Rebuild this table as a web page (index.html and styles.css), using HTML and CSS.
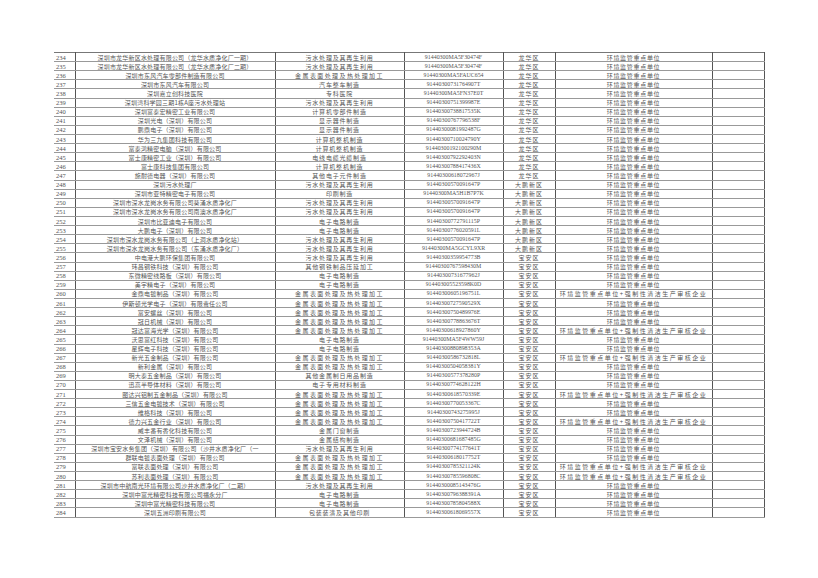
FILE: index.html
```html
<!DOCTYPE html>
<html lang="zh-CN">
<head>
<meta charset="utf-8">
<title>环境监管重点单位名录</title>
<link rel="stylesheet" href="styles.css">
</head>
<body>
<div class="page">
<table class="sheet">
<colgroup>
<col class="c-no"><col class="c-name"><col class="c-ind"><col class="c-code"><col class="c-dist"><col class="c-cat"><col class="c-note">
</colgroup>
<tbody>
<tr><td class="no">234</td><td class="name">深圳市龙华新区水处理有限公司（龙华水质净化厂一期）</td><td class="ind">污水处理及其再生利用</td><td class="code">91440300MA5F30474F</td><td class="dist">龙华区</td><td class="cat">环境监管重点单位</td><td></td></tr>
<tr><td class="no">235</td><td class="name">深圳市龙华新区水处理有限公司（龙华水质净化厂二期）</td><td class="ind">污水处理及其再生利用</td><td class="code">91440300MA5F30474F</td><td class="dist">龙华区</td><td class="cat">环境监管重点单位</td><td></td></tr>
<tr><td class="no">236</td><td class="name">深圳市东风汽车零部件制造有限公司</td><td class="ind wide">金属表面处理及热处理加工</td><td class="code">91440300MA5FAUC654</td><td class="dist">龙华区</td><td class="cat">环境监管重点单位</td><td></td></tr>
<tr><td class="no">237</td><td class="name">深圳市东风汽车有限公司</td><td class="ind">汽车整车制造</td><td class="code">91440300731764907T</td><td class="dist">龙华区</td><td class="cat">环境监管重点单位</td><td></td></tr>
<tr><td class="no">238</td><td class="name">深圳嘉立创科技医院</td><td class="ind">专科医院</td><td class="code">91440300MA5FN37E0T</td><td class="dist">龙华区</td><td class="cat">环境监管重点单位</td><td></td></tr>
<tr><td class="no">239</td><td class="name">深圳湾科学园三期1栋A座污水处理站</td><td class="ind">污水处理及其再生利用</td><td class="code">91440300751399987E</td><td class="dist">龙华区</td><td class="cat">环境监管重点单位</td><td></td></tr>
<tr><td class="no">240</td><td class="name">深圳富泰宏精密工业有限公司</td><td class="ind">计算机零部件制造</td><td class="code">91440300738817535K</td><td class="dist">龙华区</td><td class="cat">环境监管重点单位</td><td></td></tr>
<tr><td class="no">241</td><td class="name">深圳光电（深圳）有限公司</td><td class="ind">显示器件制造</td><td class="code">91440300767796538F</td><td class="dist">龙华区</td><td class="cat">环境监管重点单位</td><td></td></tr>
<tr><td class="no">242</td><td class="name">鹏鼎电子（深圳）有限公司</td><td class="ind">显示器件制造</td><td class="code">91440300081992487G</td><td class="dist">龙华区</td><td class="cat">环境监管重点单位</td><td></td></tr>
<tr><td class="no">243</td><td class="name">华为三九集团科技有限公司</td><td class="ind">计算机整机制造</td><td class="code">91440300710024790Y</td><td class="dist">龙华区</td><td class="cat">环境监管重点单位</td><td></td></tr>
<tr><td class="no">244</td><td class="name">富泰鸿精密电脑（深圳）有限公司</td><td class="ind">计算机整机制造</td><td class="code">91440300192100290M</td><td class="dist">龙华区</td><td class="cat">环境监管重点单位</td><td></td></tr>
<tr><td class="no">245</td><td class="name">富士康精密工业（深圳）有限公司</td><td class="ind">电线电缆光缆制造</td><td class="code">91440300792292403N</td><td class="dist">龙华区</td><td class="cat">环境监管重点单位</td><td></td></tr>
<tr><td class="no">246</td><td class="name">富士康科技集团有限公司</td><td class="ind">计算机整机制造</td><td class="code">91440300788417436X</td><td class="dist">龙华区</td><td class="cat">环境监管重点单位</td><td></td></tr>
<tr><td class="no">247</td><td class="name">施耐德电器（深圳）有限公司</td><td class="ind">其他电子元件制造</td><td class="code">91440300618072967J</td><td class="dist">龙华区</td><td class="cat">环境监管重点单位</td><td></td></tr>
<tr><td class="no">248</td><td class="name">深圳污水处理厂</td><td class="ind">污水处理及其再生利用</td><td class="code">91440300570091647P</td><td class="dist">大鹏新区</td><td class="cat">环境监管重点单位</td><td></td></tr>
<tr><td class="no">249</td><td class="name">深圳市亚特精密电子有限公司</td><td class="ind">印刷制造</td><td class="code">91440300MA5H1B7P7K</td><td class="dist">大鹏新区</td><td class="cat">环境监管重点单位</td><td></td></tr>
<tr><td class="no">250</td><td class="name">深圳市深水龙岗水务有限公司葵涌水质净化厂</td><td class="ind">污水处理及其再生利用</td><td class="code">91440300570091647P</td><td class="dist">大鹏新区</td><td class="cat">环境监管重点单位</td><td></td></tr>
<tr><td class="no">251</td><td class="name">深圳市深水龙岗水务有限公司南澳水质净化厂</td><td class="ind">污水处理及其再生利用</td><td class="code">91440300570091647P</td><td class="dist">大鹏新区</td><td class="cat">环境监管重点单位</td><td></td></tr>
<tr><td class="no">252</td><td class="name">深圳市比亚迪电子有限公司</td><td class="ind">电子电路制造</td><td class="code">91440300772791115P</td><td class="dist">大鹏新区</td><td class="cat">环境监管重点单位</td><td></td></tr>
<tr><td class="no">253</td><td class="name">大鹏电子（深圳）有限公司</td><td class="ind">电子电路制造</td><td class="code">91440300776020591L</td><td class="dist">大鹏新区</td><td class="cat">环境监管重点单位</td><td></td></tr>
<tr><td class="no">254</td><td class="name">深圳市深水龙岗水务有限公司（上洞水质净化站）</td><td class="ind">污水处理及其再生利用</td><td class="code">91440300570091647P</td><td class="dist">大鹏新区</td><td class="cat">环境监管重点单位</td><td></td></tr>
<tr><td class="no">255</td><td class="name">深圳市深水龙岗水务有限公司（东涌水质净化厂）</td><td class="ind">污水处理及其再生利用</td><td class="code">91440300MA5GCYL9XR</td><td class="dist">大鹏新区</td><td class="cat">环境监管重点单位</td><td></td></tr>
<tr><td class="no">256</td><td class="name">中电港大鹏环保集团有限公司</td><td class="ind">污水处理及其再生利用</td><td class="code">91440300359954773B</td><td class="dist">宝安区</td><td class="cat">环境监管重点单位</td><td></td></tr>
<tr><td class="no">257</td><td class="name">玮昌钢铁科技（深圳）有限公司</td><td class="ind">其他钢铁制品压延加工</td><td class="code">91440300767598430M</td><td class="dist">宝安区</td><td class="cat">环境监管重点单位</td><td></td></tr>
<tr><td class="no">258</td><td class="name">东微精密线路板（深圳）有限公司</td><td class="ind">电子电路制造</td><td class="code">91440300731677962J</td><td class="dist">宝安区</td><td class="cat">环境监管重点单位</td><td></td></tr>
<tr><td class="no">259</td><td class="name">美宇精电子（深圳）有限公司</td><td class="ind">电子电路制造</td><td class="code">914403005523598K0D</td><td class="dist">宝安区</td><td class="cat">环境监管重点单位</td><td></td></tr>
<tr><td class="no">260</td><td class="name">金鼎电镀制品（深圳）有限公司</td><td class="ind wide">金属表面处理及热处理加工</td><td class="code">91440300605196751L</td><td class="dist">宝安区</td><td class="cat wide">环境监管重点单位+强制性清洁生产审核企业</td><td></td></tr>
<tr><td class="no">261</td><td class="name">伊斯顿光学电子（深圳）有限责任公司</td><td class="ind wide">金属表面处理及热处理加工</td><td class="code">91440300727590529X</td><td class="dist">宝安区</td><td class="cat">环境监管重点单位</td><td></td></tr>
<tr><td class="no">262</td><td class="name">富安螺丝（深圳）有限公司</td><td class="ind wide">金属表面处理及热处理加工</td><td class="code">91440300750489976E</td><td class="dist">宝安区</td><td class="cat">环境监管重点单位</td><td></td></tr>
<tr><td class="no">263</td><td class="name">冠日机械（深圳）有限公司</td><td class="ind wide">金属表面处理及热处理加工</td><td class="code">91440300778863676T</td><td class="dist">宝安区</td><td class="cat">环境监管重点单位</td><td></td></tr>
<tr><td class="no">264</td><td class="name">冠达富海光学（深圳）有限公司</td><td class="ind wide">金属表面处理及热处理加工</td><td class="code">91440300618927860Y</td><td class="dist">宝安区</td><td class="cat wide">环境监管重点单位+强制性清洁生产审核企业</td><td></td></tr>
<tr><td class="no">265</td><td class="name">沃思富红科技（深圳）有限公司</td><td class="ind">电子电路制造</td><td class="code">91440300MA5F4WW59J</td><td class="dist">宝安区</td><td class="cat">环境监管重点单位</td><td></td></tr>
<tr><td class="no">266</td><td class="name">星辉电子科技（深圳）有限公司</td><td class="ind">电子电路制造</td><td class="code">91440300880898353A</td><td class="dist">宝安区</td><td class="cat">环境监管重点单位</td><td></td></tr>
<tr><td class="no">267</td><td class="name">新光五金制品（深圳）有限公司</td><td class="ind wide">金属表面处理及热处理加工</td><td class="code">91440300586732818L</td><td class="dist">宝安区</td><td class="cat wide">环境监管重点单位+强制性清洁生产审核企业</td><td></td></tr>
<tr><td class="no">268</td><td class="name">新利金属（深圳）有限公司</td><td class="ind wide">金属表面处理及热处理加工</td><td class="code">91440300504058381Y</td><td class="dist">宝安区</td><td class="cat">环境监管重点单位</td><td></td></tr>
<tr><td class="no">269</td><td class="name">明大泰五金制品（深圳）有限公司</td><td class="ind">其他金属制日用品制造</td><td class="code">91440300577378280P</td><td class="dist">宝安区</td><td class="cat">环境监管重点单位</td><td></td></tr>
<tr><td class="no">270</td><td class="name">迅高半导体材料（深圳）有限公司</td><td class="ind">电子专用材料制造</td><td class="code">91440300774628122H</td><td class="dist">宝安区</td><td class="cat">环境监管重点单位</td><td></td></tr>
<tr><td class="no">271</td><td class="name">图达兴铝制五金制品（深圳）有限公司</td><td class="ind wide">金属表面处理及热处理加工</td><td class="code">91440300618570339E</td><td class="dist">宝安区</td><td class="cat wide">环境监管重点单位+强制性清洁生产审核企业</td><td></td></tr>
<tr><td class="no">272</td><td class="name">三信五金电镀技术（深圳）有限公司</td><td class="ind wide">金属表面处理及热处理加工</td><td class="code">91440300770053367C</td><td class="dist">宝安区</td><td class="cat">环境监管重点单位</td><td></td></tr>
<tr><td class="no">273</td><td class="name">维格科技（深圳）有限公司</td><td class="ind wide">金属表面处理及热处理加工</td><td class="code">91440300743275995J</td><td class="dist">宝安区</td><td class="cat">环境监管重点单位</td><td></td></tr>
<tr><td class="no">274</td><td class="name">德力兴五金行业（深圳）有限公司</td><td class="ind wide">金属表面处理及热处理加工</td><td class="code">91440300750417722T</td><td class="dist">宝安区</td><td class="cat wide">环境监管重点单位+强制性清洁生产审核企业</td><td></td></tr>
<tr><td class="no">275</td><td class="name">威丰番有香化科技有限公司</td><td class="ind">金属门窗制造</td><td class="code">91440300723944724B</td><td class="dist">宝安区</td><td class="cat">环境监管重点单位</td><td></td></tr>
<tr><td class="no">276</td><td class="name">文泽机械（深圳）有限公司</td><td class="ind">金属结构制造</td><td class="code">91440300681687485G</td><td class="dist">宝安区</td><td class="cat">环境监管重点单位</td><td></td></tr>
<tr><td class="no">277</td><td class="name">深圳市宝安水务集团（深圳）有限公司（沙井水质净化厂（一</td><td class="ind">污水处理及其再生利用</td><td class="code">91440300774177641T</td><td class="dist">宝安区</td><td class="cat">环境监管重点单位</td><td></td></tr>
<tr><td class="no">278</td><td class="name">群联电镀表面处理（深圳）有限公司</td><td class="ind wide">金属表面处理及热处理加工</td><td class="code">91440300618017752T</td><td class="dist">宝安区</td><td class="cat">环境监管重点单位</td><td></td></tr>
<tr><td class="no">279</td><td class="name">富联表面处理（深圳）有限公司</td><td class="ind wide">金属表面处理及热处理加工</td><td class="code">91440300785321124K</td><td class="dist">宝安区</td><td class="cat wide">环境监管重点单位+强制性清洁生产审核企业</td><td></td></tr>
<tr><td class="no">280</td><td class="name">苏利表面处理（深圳）有限公司</td><td class="ind wide">金属表面处理及热处理加工</td><td class="code">91440300785596808C</td><td class="dist">宝安区</td><td class="cat wide">环境监管重点单位+强制性清洁生产审核企业</td><td></td></tr>
<tr><td class="no">281</td><td class="name">深圳市中航南光环境有限公司沙井水质净化厂（二期）</td><td class="ind">污水处理及其再生利用</td><td class="code">91440300085143476G</td><td class="dist">宝安区</td><td class="cat">环境监管重点单位</td><td></td></tr>
<tr><td class="no">282</td><td class="name">深圳中富光精密科技有限公司福永分厂</td><td class="ind">电子电路制造</td><td class="code">91440300796388391A</td><td class="dist">宝安区</td><td class="cat">环境监管重点单位</td><td></td></tr>
<tr><td class="no">283</td><td class="name">深圳中富光精密科技有限公司</td><td class="ind">电子电路制造</td><td class="code">91440300785804588X</td><td class="dist">宝安区</td><td class="cat">环境监管重点单位</td><td></td></tr>
<tr><td class="no">284</td><td class="name">深圳五洲印刷有限公司</td><td class="ind">包装装潢及其他印刷</td><td class="code">91440300618069557X</td><td class="dist">宝安区</td><td class="cat">环境监管重点单位</td><td></td></tr>
</tbody>
</table>
</div>
</body>
</html>
```

FILE: styles.css
```css
html, body {
  margin: 0;
  padding: 0;
  background: #ffffff;
}

.page {
  padding: 52px 0 0 54px;
}

.sheet {
  border-collapse: collapse;
  table-layout: fixed;
  width: 710px;
  font-family: "Noto Sans CJK SC", "Liberation Serif", serif;
  font-size: 6px;
  color: #555;
  border-top: 1px solid #777;
}

.c-no { width: 21px; }
.c-name { width: 200px; }
.c-ind { width: 129px; }
.c-code { width: 99px; }
.c-dist { width: 52px; }
.c-cat { width: 157px; }
.c-note { width: 52px; }

.sheet tr {
  height: 9.12px;
}

.sheet td {
  padding: 0;
  line-height: 7px;
  text-align: center;
  vertical-align: middle;
  white-space: nowrap;
  overflow: hidden;
  border-bottom: 1px solid #999;
  border-left: 1px solid #555;
  border-right: 1px solid #555;
}

.sheet td.no {
  border-left: none;
  text-align: left;
  padding-left: 2px;
  font-family: "Liberation Serif", serif;
  font-size: 6.5px;
}

.sheet td.name {
  letter-spacing: 0.2px;
}

.sheet td.ind {
  letter-spacing: 0.8px;
}

.sheet td.ind.wide {
  letter-spacing: 1.4px;
}

.sheet td.code {
  font-family: "Liberation Serif", serif;
  font-size: 5.9px;
}

.sheet td.dist {
  letter-spacing: 1px;
}

.sheet td.cat {
  letter-spacing: 0.7px;
}

.sheet td.cat.wide {
  letter-spacing: 1.5px;
}
```
